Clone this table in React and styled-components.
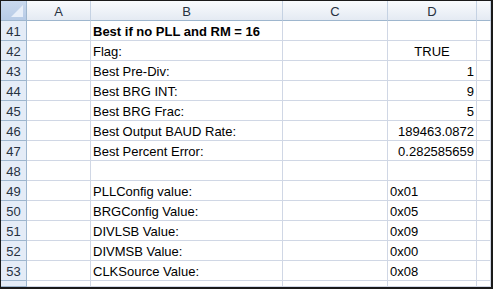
import React from 'react'
import styled, { createGlobalStyle } from 'styled-components';

const GlobalStyle = createGlobalStyle`
    html, body {
        margin: 0;
        padding: 0;
        background: #ffffff;
    }
`;

const columns = ['A', 'B', 'C', 'D', ''];

const rows = [
    { n: 41, b: 'Best if no PLL and RM = 16', bold: true },
    { n: 42, b: 'Flag:', d: 'TRUE', align: 'center' },
    { n: 43, b: 'Best Pre-Div:', d: '1', align: 'right' },
    { n: 44, b: 'Best BRG INT:', d: '9', align: 'right' },
    { n: 45, b: 'Best BRG Frac:', d: '5', align: 'right' },
    { n: 46, b: 'Best Output BAUD Rate:', d: '189463.0872', align: 'right' },
    { n: 47, b: 'Best Percent Error:', d: '0.282585659', align: 'right' },
    { n: 48 },
    { n: 49, b: 'PLLConfig value:', d: '0x01', align: 'left' },
    { n: 50, b: 'BRGConfig Value:', d: '0x05', align: 'left' },
    { n: 51, b: 'DIVLSB Value:', d: '0x09', align: 'left' },
    { n: 52, b: 'DIVMSB Value:', d: '0x00', align: 'left' },
    { n: 53, b: 'CLKSource Value:', d: '0x08', align: 'left' },
    { n: 54, short: true },
];

const App = () => {
    return (
        <>
            <GlobalStyle />
            <Sheet>
                <Grid>
                    <Corner />
                    {columns.map((c, i) => (
                        <ColHeader key={i}>{c}</ColHeader>
                    ))}
                    {rows.map((r) => (
                        <React.Fragment key={r.n}>
                            <RowHeader $short={r.short}>{r.n}</RowHeader>
                            <Cell $short={r.short} />
                            <Cell $short={r.short} $bold={r.bold}>{r.b}</Cell>
                            <Cell $short={r.short} />
                            <Cell $short={r.short} $align={r.align}>{r.d}</Cell>
                            <Cell $short={r.short} />
                        </React.Fragment>
                    ))}
                </Grid>
            </Sheet>
        </>
    )
};

const Sheet = styled.div`
    width: 493px;
    height: 289px;
    box-sizing: border-box;
    border-top: 1px solid #1a1a1a;
    border-left: 1px solid #1a1a1a;
    border-right: 2px solid #1a1a1a;
    border-bottom: 2px solid #1a1a1a;
    overflow: hidden;
    font-family: "Liberation Sans", Arial, sans-serif;
    font-size: 13px;
    color: #000;
`;

const Grid = styled.div`
    display: grid;
    grid-template-columns: 26px 64px 192px 105px 89px 14px;
    grid-auto-rows: 20px;
`;

const Corner = styled.div`
    position: relative;
    box-sizing: border-box;
    background: linear-gradient(#c9d9ee, #b7cbe6);
    border-right: 1px solid #9eb6ce;
    border-bottom: 1px solid #9eb6ce;
    &::after {
        content: '';
        position: absolute;
        right: 3px;
        bottom: 3px;
        width: 0;
        height: 0;
        border-left: 12px solid transparent;
        border-bottom: 12px solid #e8eff9;
    }
`;

const ColHeader = styled.div`
    box-sizing: border-box;
    display: flex;
    align-items: center;
    justify-content: center;
    padding-top: 2px;
    background: linear-gradient(#f9fbfd, #e4eaf3);
    border-right: 1px solid #c5d2e3;
    border-bottom: 1px solid #9eb6ce;
    color: #27313f;
`;

const RowHeader = styled.div`
    box-sizing: border-box;
    display: flex;
    align-items: ${(p) => (p.$short ? 'flex-start' : 'center')};
    justify-content: center;
    padding-top: ${(p) => (p.$short ? '4px' : '2px')};
    height: ${(p) => (p.$short ? '6px' : '20px')};
    line-height: ${(p) => (p.$short ? '12px' : 'normal')};
    overflow: hidden;
    background: #e4ecf7;
    border-right: 1px solid #9eb6ce;
    border-bottom: 1px solid #9eb6ce;
    color: #27313f;
`;

const Cell = styled.div`
    box-sizing: border-box;
    display: flex;
    align-items: center;
    justify-content: ${(p) =>
        p.$align === 'right' ? 'flex-end' : p.$align === 'center' ? 'center' : 'flex-start'};
    padding: 2px 2px 0 2px;
    height: ${(p) => (p.$short ? '6px' : '20px')};
    overflow: visible;
    white-space: nowrap;
    font-weight: ${(p) => (p.$bold ? 700 : 400)};
    border-right: 1px solid #d0d7e5;
    border-bottom: 1px solid #d0d7e5;
`;

export default App;
